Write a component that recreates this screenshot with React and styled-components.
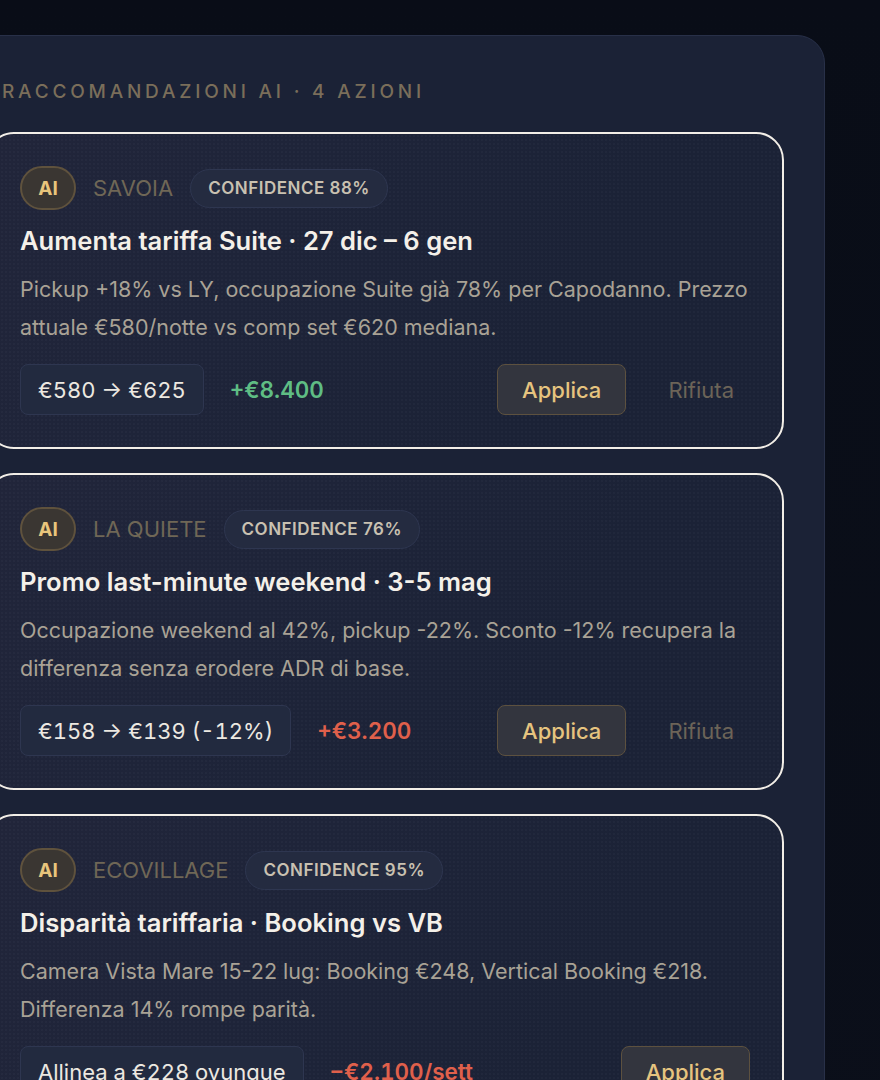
import styled, { createGlobalStyle } from "styled-components";

const GlobalStyle = createGlobalStyle`
  html, body {
    margin: 0;
    padding: 0;
    background: #0a0e18;
  }
  body {
    font-family: Inter, "Noto Sans", sans-serif;
    overflow: hidden;
    -webkit-font-smoothing: antialiased;
  }
  * {
    box-sizing: border-box;
  }
`;

const recommendations = [
  {
    id: 1,
    property: "Savoia",
    confidence: 88,
    title: "Aumenta tariffa Suite · 27 dic – 6 gen",
    text: "Pickup +18% vs LY, occupazione Suite già 78% per Capodanno. Prezzo attuale €580/notte vs comp set €620 mediana.",
    change: "€580 → €625",
    impact: "+€8.400",
    tone: "up",
  },
  {
    id: 2,
    property: "La Quiete",
    confidence: 76,
    title: "Promo last-minute weekend · 3-5 mag",
    text: "Occupazione weekend al 42%, pickup -22%. Sconto -12% recupera la differenza senza erodere ADR di base.",
    change: "€158 → €139 (-12%)",
    impact: "+€3.200",
    tone: "down",
  },
  {
    id: 3,
    property: "Ecovillage",
    confidence: 95,
    title: "Disparità tariffaria · Booking vs VB",
    text: "Camera Vista Mare 15-22 lug: Booking €248, Vertical Booking €218. Differenza 14% rompe parità.",
    change: "Allinea a €228 ovunque",
    impact: "−€2.100/sett",
    tone: "down",
  },
];

function App() {
  return (
    <>
      <GlobalStyle />
      <Page>
        <Panel>
          <PanelLabel>Raccomandazioni AI · 4 azioni</PanelLabel>
          <CardList>
            {recommendations.map((rec) => (
              <Card key={rec.id}>
                <MetaRow>
                  <AiBadge>AI</AiBadge>
                  <Property>{rec.property}</Property>
                  <Confidence>Confidence {rec.confidence}%</Confidence>
                </MetaRow>
                <Title>{rec.title}</Title>
                <Description>{rec.text}</Description>
                <ActionRow>
                  <Change>{rec.change}</Change>
                  <Impact $tone={rec.tone}>{rec.impact}</Impact>
                  <ApplyButton>Applica</ApplyButton>
                  <RejectButton>Rifiuta</RejectButton>
                </ActionRow>
              </Card>
            ))}
          </CardList>
        </Panel>
      </Page>
    </>
  );
}

const Page = styled.div`
  min-height: 1080px;
  padding-top: 35px;
  background: linear-gradient(180deg, #090d17 0%, #0b0f1a 100%);
`;

const Panel = styled.section`
  width: 882px;
  min-height: 1100px;
  margin-left: -57px;
  padding: 0 40px 40px 42px;
  background: #1b2236;
  border: 1px solid #283048;
  border-radius: 28px;
`;

const PanelLabel = styled.div`
  padding: 44px 0 0 16px;
  margin-bottom: 28px;
  font-size: 19px;
  line-height: 24px;
  font-weight: 500;
  letter-spacing: 0.2em;
  text-transform: uppercase;
  color: #7a6e5a;
`;

const CardList = styled.div`
  display: flex;
  flex-direction: column;
  gap: 24px;
`;

const Card = styled.article`
  display: flex;
  flex-direction: column;
  padding: 32px;
  border: 2px solid #f2eee7;
  border-radius: 28px;
  background:
    radial-gradient(rgba(255, 255, 255, 0.022) 1px, transparent 1px) 0 0 / 4px 4px,
    linear-gradient(120deg, #21253a 0%, #1e2439 35%, #1b2236 70%);
`;

const MetaRow = styled.div`
  display: flex;
  align-items: center;
  gap: 17px;
  height: 44px;
  margin-bottom: 14px;
`;

const AiBadge = styled.span`
  display: inline-flex;
  align-items: center;
  justify-content: center;
  width: 56px;
  height: 44px;
  border: 2px solid #5f523d;
  border-radius: 22px;
  background: #3a3632;
  color: #e8c57c;
  font-size: 19px;
  font-weight: 700;
`;

const Property = styled.span`
  font-size: 22px;
  color: #6f6756;
  text-transform: uppercase;
`;

const Confidence = styled.span`
  display: inline-flex;
  align-items: center;
  height: 39px;
  padding: 0 17px;
  border: 1.5px solid #2e3650;
  border-radius: 20px;
  background: #242b40;
  color: #c9c1b1;
  font-size: 17px;
  font-weight: 600;
  letter-spacing: 0.03em;
  text-transform: uppercase;
`;

const Title = styled.h3`
  margin: 0 0 12px;
  font-size: 25.6px;
  line-height: 34px;
  font-weight: 600;
  color: #f4f0e9;
`;

const Description = styled.p`
  margin: 0 0 18px;
  font-size: 21.5px;
  line-height: 38px;
  color: #a9a295;
`;

const ActionRow = styled.div`
  display: flex;
  align-items: center;
  flex-wrap: wrap;
  column-gap: 26px;
  row-gap: 16px;
`;

const Change = styled.span`
  display: inline-flex;
  align-items: center;
  height: 51px;
  padding: 0 17px;
  border: 1.5px solid #2e3650;
  border-radius: 8px;
  background: #222a3f;
  color: #ece8e1;
  font-size: 22px;
  font-variant-numeric: tabular-nums;
`;

const Impact = styled.span`
  margin-right: 24px;
  font-size: 22.5px;
  font-weight: 600;
  font-variant-numeric: tabular-nums;
  color: ${({ $tone }) => ($tone === "up" ? "#5fbd84" : "#e0604b")};
`;

const ApplyButton = styled.button`
  margin-left: auto;
  height: 51px;
  padding: 0 24px;
  border: 1.5px solid #5d513f;
  border-radius: 8px;
  background: #33353e;
  color: #e6c47f;
  font-family: inherit;
  font-size: 22px;
  font-weight: 500;
  cursor: pointer;
`;

const RejectButton = styled.button`
  height: 51px;
  padding: 0 16px;
  border: none;
  background: none;
  color: #6c6458;
  font-family: inherit;
  font-size: 22px;
  cursor: pointer;
`;

export default App;
